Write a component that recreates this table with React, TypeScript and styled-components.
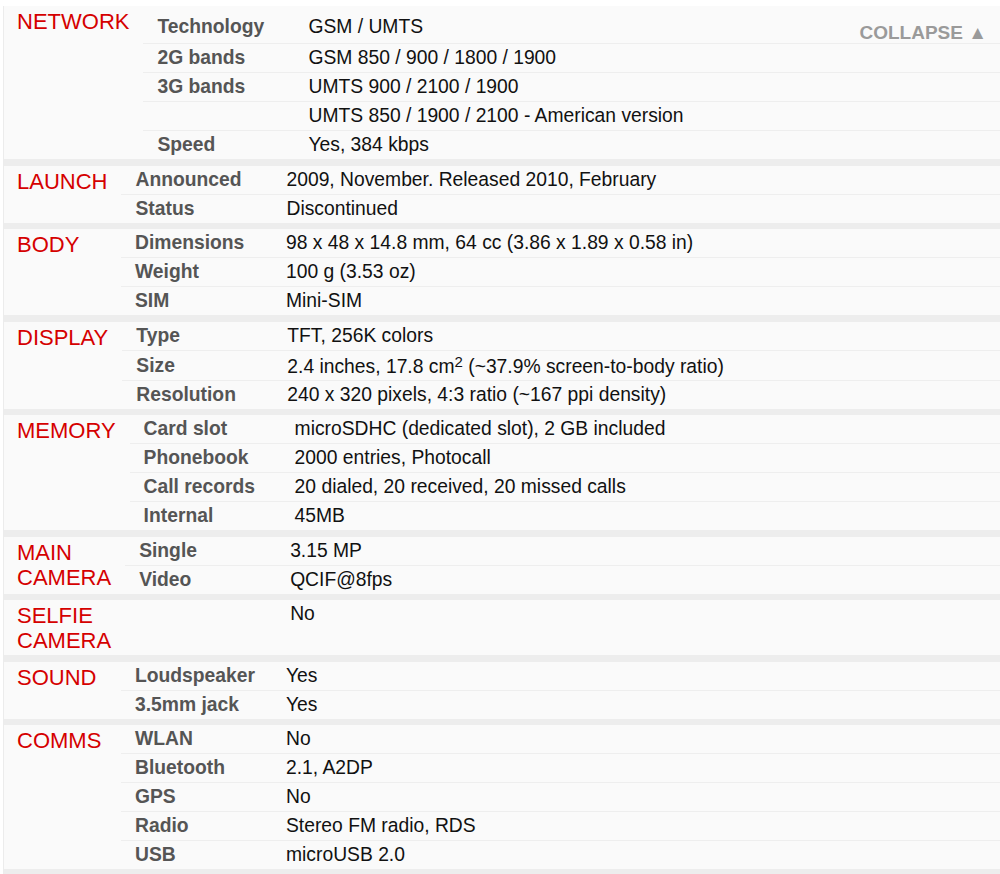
import React from "react";
import styled, { createGlobalStyle } from "styled-components";

const GlobalStyle = createGlobalStyle`
  html, body { margin: 0; padding: 0; background: #ffffff; }
  body { font-family: "Liberation Sans", Arial, sans-serif; }
`;

const Panel = styled.div`
  margin: 6px 0 0 3px;
  border-left: 1px solid #ececec;
  background: #ededed;
  position: relative;
  display: flex;
  flex-direction: column;
  gap: 6.5px;
  padding-bottom: 6.5px;
`;

const Section = styled.section`
  display: grid;
  grid-template-columns: auto 1fr;
  background: #fafafa;
  position: relative;
`;

const Header = styled.div`
  min-width: 90px;
  padding: 3px 14px 2px 13px;
  font-size: 22px;
  line-height: 25px;
  color: #d50000;
  text-transform: uppercase;
`;

const RowList = styled.div`
  display: flex;
  flex-direction: column;
`;

const Row = styled.div<{ $first?: boolean; $tall?: boolean }>`
  display: grid;
  grid-template-columns: 151px 1fr;
  line-height: ${(p) => (p.$tall ? "29px" : "28px")};
  padding-top: ${(p) => (p.$first ? "7px" : "0")};
  padding-bottom: ${(p) => (p.$first ? "2px" : "0")};
  border-bottom: 1px solid #eeeeee;
  &:last-child { border-bottom: none; }
`;

const Label = styled.div`
  padding-left: 14px;
  font-size: 19.3px;
  font-weight: bold;
  color: #555555;
  white-space: nowrap;
`;

const Value = styled.div<{ $tall?: boolean }>`
  padding-left: 14px;
  padding-top: ${(p) => (p.$tall ? "3px" : "0")};
  line-height: ${(p) => (p.$tall ? "26px" : "inherit")};
  font-size: 19.3px;
  color: #111111;
  white-space: nowrap;
`;

const Sup = styled.sup`
  font-size: 15px;
  line-height: 0;
  vertical-align: 6px;
`;

const Collapse = styled.a`
  position: absolute;
  top: 16px;
  right: 13px;
  font-size: 19px;
  font-weight: bold;
  color: #9a9a9a;
  text-decoration: none;
  cursor: pointer;
`;

type Spec = { label: string; value: React.ReactNode; tall?: boolean };
type Group = { title: React.ReactNode; rows: Spec[]; collapse?: boolean };

const groups: Group[] = [
  {
    title: "Network",
    collapse: true,
    rows: [
      { label: "Technology", value: "GSM / UMTS" },
      { label: "2G bands", value: "GSM 850 / 900 / 1800 / 1900" },
      { label: "3G bands", value: "UMTS 900 / 2100 / 1900" },
      { label: "", value: "UMTS 850 / 1900 / 2100 - American version" },
      { label: "Speed", value: "Yes, 384 kbps" },
    ],
  },
  {
    title: "Launch",
    rows: [
      { label: "Announced", value: "2009, November. Released 2010, February" },
      { label: "Status", value: "Discontinued" },
    ],
  },
  {
    title: "Body",
    rows: [
      { label: "Dimensions", value: "98 x 48 x 14.8 mm, 64 cc (3.86 x 1.89 x 0.58 in)" },
      { label: "Weight", value: "100 g (3.53 oz)" },
      { label: "SIM", value: "Mini-SIM" },
    ],
  },
  {
    title: "Display",
    rows: [
      { label: "Type", value: "TFT, 256K colors" },
      {
        label: "Size",
        tall: true,
        value: (
          <>
            2.4 inches, 17.8 cm<Sup>2</Sup> (~37.9% screen-to-body ratio)
          </>
        ),
      },
      { label: "Resolution", value: "240 x 320 pixels, 4:3 ratio (~167 ppi density)" },
    ],
  },
  {
    title: "Memory",
    rows: [
      { label: "Card slot", value: "microSDHC (dedicated slot), 2 GB included" },
      { label: "Phonebook", value: "2000 entries, Photocall" },
      { label: "Call records", value: "20 dialed, 20 received, 20 missed calls" },
      { label: "Internal", value: "45MB" },
    ],
  },
  {
    title: (
      <>
        Main
        <br />
        Camera
      </>
    ),
    rows: [
      { label: "Single", value: "3.15 MP" },
      { label: "Video", value: "QCIF@8fps" },
    ],
  },
  {
    title: (
      <>
        Selfie
        <br />
        camera
      </>
    ),
    rows: [{ label: "", value: "No" }],
  },
  {
    title: "Sound",
    rows: [
      { label: "Loudspeaker", value: "Yes" },
      { label: "3.5mm jack", value: "Yes" },
    ],
  },
  {
    title: "Comms",
    rows: [
      { label: "WLAN", value: "No" },
      { label: "Bluetooth", value: "2.1, A2DP" },
      { label: "GPS", value: "No" },
      { label: "Radio", value: "Stereo FM radio, RDS" },
      { label: "USB", value: "microUSB 2.0" },
    ],
  },
];

export default function App() {
  return (
    <>
      <GlobalStyle />
      <Panel>
        {groups.map((g, gi) => (
          <Section key={gi}>
            <Header>{g.title}</Header>
            <RowList>
              {g.rows.map((r, ri) => (
                <Row key={ri} $first={g.collapse && ri === 0} $tall={r.tall}>
                  <Label>{r.label}</Label>
                  <Value $tall={r.tall}>{r.value}</Value>
                </Row>
              ))}
            </RowList>
            {g.collapse && <Collapse>COLLAPSE ▲</Collapse>}
          </Section>
        ))}
      </Panel>
    </>
  );
}
